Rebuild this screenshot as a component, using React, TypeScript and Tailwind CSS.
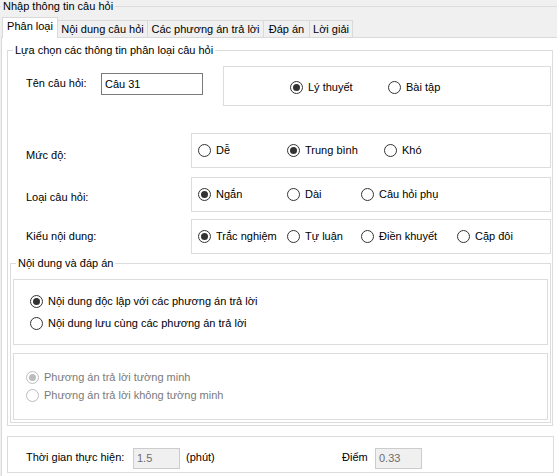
import React from "react";

function Radio({ checked, disabled }: { checked?: boolean; disabled?: boolean }) {
  return (
    <span
      className={`w-[13px] h-[13px] rounded-full border flex items-center justify-center shrink-0 bg-white ${
        disabled ? "border-[#bcbcbc]" : "border-[#333333]"
      }`}
    >
      {checked && (
        <span className={`w-[7px] h-[7px] rounded-full ${disabled ? "bg-[#bcbcbc]" : "bg-[#333333]"}`} />
      )}
    </span>
  );
}

function Opt({
  label,
  checked,
  disabled,
  className = "",
}: {
  label: string;
  checked?: boolean;
  disabled?: boolean;
  className?: string;
}) {
  return (
    <div className={`flex items-center h-[13px] shrink-0 ${className}`}>
      <Radio checked={checked} disabled={disabled} />
      <span className={`ml-[5px] whitespace-nowrap ${disabled ? "text-[#7a7a7a]" : "text-black"}`}>{label}</span>
    </div>
  );
}

export default function App() {
  return (
    <div className="w-[557px] h-[476px] overflow-hidden bg-[#f0f0f0] text-[11px] leading-[13px] text-black font-['Liberation_Sans',Arial,sans-serif]">
      <fieldset className="border-t border-[#dcdcdc] h-full min-w-0">
        <legend className="ml-[1px] px-[2px]">Nhập thông tin câu hỏi</legend>

        {/* Tab strip */}
        <div className="mt-[4px] flex items-end h-[20px] pl-[2px] relative z-10">
          <div className="h-[21px] w-[56px] -mb-[1px] bg-white border border-b-0 border-[#d9d9d9] flex justify-center pt-[2px]">
            Phân loại
          </div>
          <div className="h-[17px] w-[90px] border-t border-r border-[#d9d9d9] flex justify-center pt-[2px]">
            Nội dung câu hỏi
          </div>
          <div className="h-[17px] w-[116px] border-t border-r border-[#d9d9d9] flex justify-center pt-[2px]">
            Các phương án trả lời
          </div>
          <div className="h-[17px] w-[46px] border-t border-r border-[#d9d9d9] flex justify-center pt-[2px]">
            Đáp án
          </div>
          <div className="h-[17px] w-[43px] border-t border-r border-[#d9d9d9] flex justify-center pt-[2px]">
            Lời giải
          </div>
        </div>

        {/* Tab page */}
        <div className="ml-[1px] h-[439px] bg-white border-t border-l border-[#d9d9d9]">
          <fieldset className="ml-[5px] mt-[6px] w-[546px] h-[382px] border border-[#dcdcdc] min-w-0">
            <legend className="ml-[5px] px-[2px]">Lựa chọn các thông tin phân loại câu hỏi</legend>

            {/* Row 1 */}
            <div className="mt-[9px] flex items-start">
              <div className="w-[93px] pl-[18px] pt-[11px] shrink-0">Tên câu hỏi:</div>
              <div className="mt-[7px] w-[102px] h-[22px] border border-[#7a7a7a] bg-white pl-[3px] flex items-center shrink-0">
                Câu 31
              </div>
              <div className="ml-[20px] w-[328px] h-[40px] border border-[#dcdcdc] flex pl-[66px] pt-[14px] shrink-0">
                <Opt label="Lý thuyết" checked className="w-[98px]" />
                <Opt label="Bài tập" />
              </div>
            </div>

            {/* Row 2 */}
            <div className="mt-[27px] flex items-start">
              <div className="w-[183px] pl-[18px] pt-[16px] shrink-0">Mức độ:</div>
              <div className="w-[360px] h-[35px] border border-[#dcdcdc] flex pl-[6px] pt-[10px] shrink-0">
                <Opt label="Dễ" className="w-[89px]" />
                <Opt label="Trung bình" checked className="w-[97px]" />
                <Opt label="Khó" />
              </div>
            </div>

            {/* Row 3 */}
            <div className="mt-[9px] flex items-start">
              <div className="w-[183px] pl-[18px] pt-[14px] shrink-0">Loại câu hỏi:</div>
              <div className="w-[360px] h-[35px] border border-[#dcdcdc] flex pl-[6px] pt-[10px] shrink-0">
                <Opt label="Ngắn" checked className="w-[89px]" />
                <Opt label="Dài" className="w-[74px]" />
                <Opt label="Câu hỏi phụ" />
              </div>
            </div>

            {/* Row 4 */}
            <div className="mt-[7px] flex items-start">
              <div className="w-[183px] pl-[18px] pt-[11px] shrink-0">Kiểu nội dung:</div>
              <div className="w-[360px] h-[35px] border border-[#dcdcdc] flex pl-[6px] pt-[10px] shrink-0">
                <Opt label="Trắc nghiệm" checked className="w-[89px]" />
                <Opt label="Tự luận" className="w-[74px]" />
                <Opt label="Điền khuyết" className="w-[96px]" />
                <Opt label="Cặp đôi" />
              </div>
            </div>

            {/* Nội dung và đáp án */}
            <fieldset className="mt-[3px] ml-[2px] w-[541px] h-[166px] border border-[#dcdcdc] min-w-0">
              <legend className="ml-[5px] px-[2px]">Nội dung và đáp án</legend>
              <div className="mt-[9px] ml-[2px] w-[535px] h-[66px] border border-[#dcdcdc] flex flex-col gap-[9px] pl-[16px] pt-[15px]">
                <Opt label="Nội dung độc lập với các phương án trả lời" checked />
                <Opt label="Nội dung lưu cùng các phương án trả lời" />
              </div>
              <div className="mt-[8px] ml-[2px] w-[535px] h-[67px] border border-[#dcdcdc] flex flex-col gap-[5px] pl-[12px] pt-[17px]">
                <Opt label="Phương án trả lời tường minh" checked disabled />
                <Opt label="Phương án trả lời không tường minh" disabled />
              </div>
            </fieldset>
          </fieldset>

          {/* Thời gian */}
          <div className="mt-[10px] ml-[5px] w-[547px] h-[37px] border border-[#dcdcdc] flex items-start">
            <div className="w-[125px] pl-[18px] pt-[14px] shrink-0 whitespace-nowrap">Thời gian thực hiện:</div>
            <div className="mt-[11px] w-[47px] h-[21px] border border-[#cccccc] bg-[#f0f0f0] text-[#6d6d6d] pl-[3px] flex items-center shrink-0">
              1.5
            </div>
            <div className="ml-[6px] w-[156px] pt-[14px] shrink-0">(phút)</div>
            <div className="w-[33px] pt-[14px] shrink-0">Điểm</div>
            <div className="mt-[11px] w-[47px] h-[21px] border border-[#cccccc] bg-[#f0f0f0] text-[#6d6d6d] pl-[3px] flex items-center shrink-0">
              0.33
            </div>
          </div>
        </div>
      </fieldset>
    </div>
  );
}
